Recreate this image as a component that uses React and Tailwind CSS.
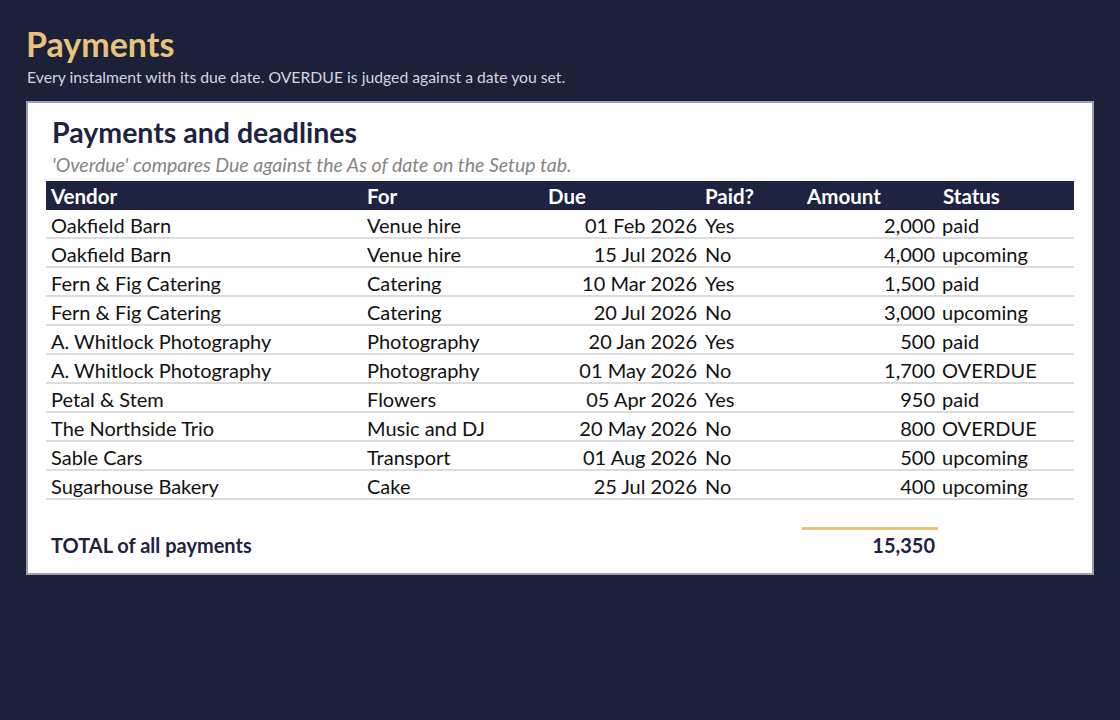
import React from 'react';

const rows = [
  ['Oakfield Barn', 'Venue hire', '01 Feb 2026', 'Yes', '2,000', 'paid'],
  ['Oakfield Barn', 'Venue hire', '15 Jul 2026', 'No', '4,000', 'upcoming'],
  ['Fern & Fig Catering', 'Catering', '10 Mar 2026', 'Yes', '1,500', 'paid'],
  ['Fern & Fig Catering', 'Catering', '20 Jul 2026', 'No', '3,000', 'upcoming'],
  ['A. Whitlock Photography', 'Photography', '20 Jan 2026', 'Yes', '500', 'paid'],
  ['A. Whitlock Photography', 'Photography', '01 May 2026', 'No', '1,700', 'OVERDUE'],
  ['Petal & Stem', 'Flowers', '05 Apr 2026', 'Yes', '950', 'paid'],
  ['The Northside Trio', 'Music and DJ', '20 May 2026', 'No', '800', 'OVERDUE'],
  ['Sable Cars', 'Transport', '01 Aug 2026', 'No', '500', 'upcoming'],
  ['Sugarhouse Bakery', 'Cake', '25 Jul 2026', 'No', '400', 'upcoming'],
];

// column widths copied from the sheet
const cols = 'grid grid-cols-[316px_181px_157px_102px_136px_136px]';

export default function App() {
  return (
    <div className="min-h-screen w-full bg-[#1c2039] px-[26px] pt-[24px] font-['Lato','Liberation_Sans',sans-serif]">
      {/* Heading */}
      <h1 className="text-[34px] leading-[40px] font-bold text-[#e6c47a]">Payments</h1>
      <p className="mt-[2px] text-[15.75px] leading-[22px] text-[#d4d6de] pl-[1px]">
        Every instalment with its due date. OVERDUE is judged against a date you set.
      </p>

      {/* Sheet */}
      <div className="mt-[13px] w-[1068px] bg-white border-2 border-[#9a9eb0] pl-[18px] pt-[11px] pb-[15px]">
        <h2 className="pl-[6px] text-[28.5px] leading-[36px] font-bold text-[#1e2342]">Payments and deadlines</h2>
        <p className="pl-[6px] text-[19.5px] leading-[30px] italic text-[#858585]">
          'Overdue' compares Due against the As of date on the Setup tab.
        </p>

        <div className={`${cols} mt-[1px] w-[1028px] h-[29px] items-center bg-[#1e2342] text-white text-[20.5px] font-bold`}>
          <div className="pl-[5px]">Vendor</div>
          <div className="pl-[5px]">For</div>
          <div className="pl-[5px]">Due</div>
          <div className="pl-[5px]">Paid?</div>
          <div className="pl-[5px]">Amount</div>
          <div className="pl-[5px]">Status</div>
        </div>

        {rows.map((r, i) => (
          <div key={i} className={`${cols} w-[1028px] h-[29px] pb-[3px] items-center border-b-2 border-[#dcdcdc] text-[20px] text-[#111111]`}>
            <div className="pl-[5px]">{r[0]}</div>
            <div className="pl-[5px]">{r[1]}</div>
            <div className="pr-[3px] text-right">{r[2]}</div>
            <div className="pl-[5px]">{r[3]}</div>
            <div className="pr-[3px] text-right">{r[4]}</div>
            <div className="pl-[4px]">{r[5]}</div>
          </div>
        ))}

        {/* Total */}
        <div className={`${cols} w-[1028px] mt-[27px]`}>
          <div className="col-span-4" />
          <div className="h-[3px] bg-[#e6c47a]" />
        </div>
        <div className={`${cols} w-[1028px] h-[28px] pb-[2px] items-center text-[20px] font-bold text-[#1e2342]`}>
          <div className="col-span-4 pl-[5px]">TOTAL of all payments</div>
          <div className="pr-[3px] text-right">15,350</div>
        </div>
      </div>
    </div>
  );
}
